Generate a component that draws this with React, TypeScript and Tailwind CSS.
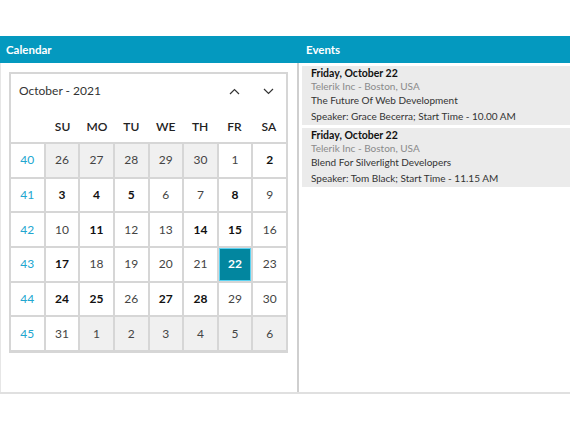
import React from "react";

type Day = { n: number; other?: boolean; bold?: boolean; selected?: boolean };

const weeks: { wk: number; days: Day[] }[] = [
  {
    wk: 40,
    days: [
      { n: 26, other: true },
      { n: 27, other: true },
      { n: 28, other: true },
      { n: 29, other: true },
      { n: 30, other: true },
      { n: 1 },
      { n: 2, bold: true },
    ],
  },
  {
    wk: 41,
    days: [
      { n: 3, bold: true },
      { n: 4, bold: true },
      { n: 5, bold: true },
      { n: 6 },
      { n: 7 },
      { n: 8, bold: true },
      { n: 9 },
    ],
  },
  {
    wk: 42,
    days: [
      { n: 10 },
      { n: 11, bold: true },
      { n: 12 },
      { n: 13 },
      { n: 14, bold: true },
      { n: 15, bold: true },
      { n: 16 },
    ],
  },
  {
    wk: 43,
    days: [
      { n: 17, bold: true },
      { n: 18 },
      { n: 19 },
      { n: 20 },
      { n: 21 },
      { n: 22, bold: true, selected: true },
      { n: 23 },
    ],
  },
  {
    wk: 44,
    days: [
      { n: 24, bold: true },
      { n: 25, bold: true },
      { n: 26 },
      { n: 27, bold: true },
      { n: 28, bold: true },
      { n: 29 },
      { n: 30 },
    ],
  },
  {
    wk: 45,
    days: [
      { n: 31 },
      { n: 1, other: true },
      { n: 2, other: true },
      { n: 3, other: true },
      { n: 4, other: true },
      { n: 5, other: true },
      { n: 6, other: true },
    ],
  },
];

const dayNames = ["SU", "MO", "TU", "WE", "TH", "FR", "SA"];

const events = [
  {
    date: "Friday, October 22",
    place: "Telerik Inc - Boston, USA",
    title: "The Future Of Web Development",
    speaker: "Speaker: Grace Becerra; Start Time - 10.00 AM",
  },
  {
    date: "Friday, October 22",
    place: "Telerik Inc - Boston, USA",
    title: "Blend For Silverlight Developers",
    speaker: "Speaker: Tom Black; Start Time - 11.15 AM",
  },
];

const Chevron = ({ up }: { up?: boolean }) => (
  <svg width="11" height="7" viewBox="0 0 11 7" fill="none">
    <polyline
      points={up ? "1,6 5.5,1.5 10,6" : "1,1 5.5,5.5 10,1"}
      stroke="#333"
      strokeWidth="1.2"
    />
  </svg>
);

const DayCell = ({ d }: { d: Day }) => {
  if (d.selected) {
    return (
      <div className="flex h-[32.7px] items-center justify-center border border-[#5cd3f2] bg-[#02869f] text-[12px] font-bold text-white">
        {d.n}
      </div>
    );
  }
  return (
    <div
      className={`flex h-[32.7px] items-center justify-center text-[12px] ${
        d.other ? "bg-[#f0f0f0]" : "bg-white"
      } ${d.bold ? "font-bold text-[#111]" : "text-[#444]"}`}
    >
      {d.n}
    </div>
  );
};

export default function App() {
  return (
    <div
      className="h-[430px] w-[570px] bg-white pt-[36px]"
      style={{ fontFamily: 'Lato, "Open Sans", sans-serif' }}
    >
      <div className="flex h-[27px] bg-[#0499bf] text-[11.5px] font-bold text-white">
        <div className="flex w-[298px] items-center pl-[6px]">Calendar</div>
        <div className="flex flex-1 items-center pl-[8px]">Events</div>
      </div>
      <div className="flex h-[331px] border-b-2 border-[#e0e0e0]">
        {/* calendar side */}
        <div className="w-[297px] border-l border-[#e6e6e6] pl-[8px] pt-[9px]">
          <div className="w-[279px] border-x-2 border-t-2 border-b-[3px] border-[#d6d6d6] bg-[#d6d6d6]">
            <div className="flex h-[39px] items-center bg-white pb-[5px] pl-[8px] pr-[12px]">
              <span className="flex-1 text-[12px] text-[#333]">
                October - 2021
              </span>
              <div className="flex items-center gap-[23px]">
                <Chevron up />
                <Chevron />
              </div>
            </div>
            <div className="grid h-[29px] grid-cols-8 items-center bg-white pb-[2px] text-[12px] font-semibold text-[#222]">
              <span />
              {dayNames.map((n) => (
                <span key={n} className="text-center">
                  {n}
                </span>
              ))}
            </div>
            <div className="mt-[2px] grid grid-cols-8 gap-[2px]">
              {weeks.map((w) => (
                <React.Fragment key={w.wk}>
                  <div className="flex h-[32.7px] items-center justify-center bg-white text-[12px] text-[#22a6cf]">
                    {w.wk}
                  </div>
                  {w.days.map((d, i) => (
                    <DayCell key={i} d={d} />
                  ))}
                </React.Fragment>
              ))}
            </div>
          </div>
        </div>
        <div className="w-[2px] bg-[#cfcfcf]" />
        {/* events side */}
        <div className="flex flex-1 flex-col gap-[3px] pl-[3px] pt-[3px]">
          {events.map((e, i) => (
            <div key={i} className="h-[59px] bg-[#ebebeb] pl-[9px] pt-[1px] text-[10px]">
              <div className="h-[13px] text-[10.5px] leading-[13px] font-bold text-[#111]">
                {e.date}
              </div>
              <div className="h-[12px] leading-[12px] text-[#8a8a8a]">
                {e.place}
              </div>
              <div className="h-[16px] leading-[16px] text-[#333]">
                {e.title}
              </div>
              <div className="h-[16px] leading-[16px] text-[#333]">
                {e.speaker}
              </div>
            </div>
          ))}
        </div>
      </div>
    </div>
  );
}
